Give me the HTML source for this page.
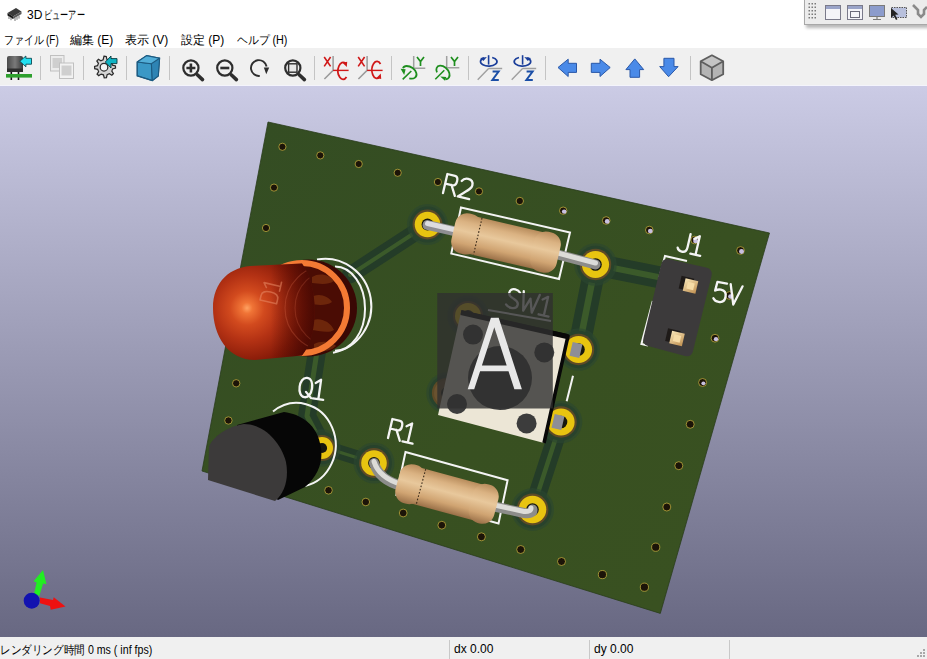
<!DOCTYPE html>
<html><head><meta charset="utf-8">
<style>
html,body{margin:0;padding:0;width:927px;height:659px;overflow:hidden;background:#fff;font-family:"Liberation Sans",sans-serif;}
.abs{position:absolute;}
#title{left:0;top:0;width:927px;height:26px;background:#fff;}
#title .t{left:27px;top:7px;font-size:12px;color:#000;white-space:nowrap;}
#menu{left:0;top:26px;width:927px;height:22px;background:#fff;}
#menu span{position:absolute;top:6px;font-size:12px;color:#000;white-space:nowrap;}
#tb{left:0;top:48px;width:927px;height:38px;background:#f0f0f0;}
.sep{position:absolute;top:8px;width:1px;height:24px;background:#c8c8c8;}
#canvas{left:0;top:86px;width:927px;height:551px;}
#status{left:0;top:637px;width:927px;height:22px;background:#f0f0f0;}
#status span{position:absolute;top:5px;font-size:12px;color:#000;white-space:nowrap;}
.ssep{position:absolute;top:3px;width:1px;height:19px;background:#c8c8c8;}
</style></head><body>
<div id="title" class="abs">
  <svg class="abs" style="left:6px;top:6px" width="17" height="16" viewBox="0 0 17 16">
    <path d="M1.5,7 L10,2 L15.5,5.5 L7,10.5 Z" fill="#3a3a3a"/>
    <path d="M1.5,7 L7,10.5 L7,13 L1.5,9.5 Z" fill="#151515"/>
    <path d="M7,10.5 L15.5,5.5 L15.5,8 L7,13 Z" fill="#5a5a5a"/>
    <path d="M3,10 L3,13 M5,11.2 L5,14.2 M9,12 L9,15 M11,10.8 L11,13.8 M13,9.6 L13,12.6" stroke="#666" stroke-width="0.9"/>
  </svg>
  <span class="abs t" style="top:8px">3D</span><span class="abs t" style="left:44px;transform:scaleX(0.68);transform-origin:0 0">ビューアー</span>
</div>
<div id="menu" class="abs">
  <span style="left:4px;transform:scaleX(0.82);transform-origin:0 0">ファイル (F)</span>
  <span style="left:70px">編集 (E)</span>
  <span style="left:125px">表示 (V)</span>
  <span style="left:181px">設定 (P)</span>
  <span style="left:237px;transform:scaleX(0.9);transform-origin:0 0">ヘルプ (H)</span>
</div>
<div class="abs" style="left:804px;top:0;width:123px;height:24px;background:#ececec;border-left:1px solid #a8a8a8;border-bottom:1px solid #a8a8a8;box-shadow:2px 3px 3px rgba(0,0,0,0.28);"></div>
<svg class="abs" style="left:804px;top:0" width="123" height="24" viewBox="804 0 123 24">
  <g fill="#7a7a7a">
    <rect x="808.5" y="3" width="1.5" height="1.5"/><rect x="811.5" y="3" width="1.5" height="1.5"/><rect x="814.5" y="3" width="1.5" height="1.5"/>
    <rect x="808.5" y="6.5" width="1.5" height="1.5"/><rect x="811.5" y="6.5" width="1.5" height="1.5"/><rect x="814.5" y="6.5" width="1.5" height="1.5"/>
    <rect x="808.5" y="10" width="1.5" height="1.5"/><rect x="811.5" y="10" width="1.5" height="1.5"/><rect x="814.5" y="10" width="1.5" height="1.5"/>
    <rect x="808.5" y="13.5" width="1.5" height="1.5"/><rect x="811.5" y="13.5" width="1.5" height="1.5"/><rect x="814.5" y="13.5" width="1.5" height="1.5"/>
    <rect x="808.5" y="17" width="1.5" height="1.5"/><rect x="811.5" y="17" width="1.5" height="1.5"/><rect x="814.5" y="17" width="1.5" height="1.5"/>
  </g>
  <rect x="825.5" y="5.5" width="15" height="14" fill="#f4f4f8" stroke="#7a7a8a" stroke-width="1"/>
  <rect x="826" y="6" width="14" height="3" fill="#9aa4c8"/>
  <rect x="847.5" y="5.5" width="15" height="14" fill="#f4f4f8" stroke="#7a7a8a" stroke-width="1"/>
  <rect x="848" y="6" width="14" height="3" fill="#9aa4c8"/>
  <rect x="850.5" y="11.5" width="9" height="6" fill="none" stroke="#6a6a7a" stroke-width="1"/>
  <rect x="869.5" y="5.5" width="15" height="11" fill="#8c9ccc" stroke="#7a7a7a" stroke-width="1"/>
  <path d="M877,16.5 L877,19 M873,19.5 L881,19.5" stroke="#7a7a7a" stroke-width="1.2"/>
  <rect x="891.5" y="7.5" width="15" height="10" fill="#b8c0dc" stroke="#555" stroke-width="1" stroke-dasharray="1.5,1"/>
  <path d="M891,8 L891,18 L893.5,15.5 L896,20 L897.5,19.2 L895.2,14.8 L898.5,14.5 Z" fill="#222"/>
  <path d="M913,5 L918,10 L918,14 L921,17 L924,14 L924,10 L927,7" fill="none" stroke="#8a8a8a" stroke-width="2.6"/>
</svg>
<div id="tb" class="abs"></div><div class="abs" style="left:0;top:85px;width:927px;height:1px;background:#f4f4fc"></div>
<svg class="abs" style="left:0;top:48px" width="927" height="38" viewBox="0 48 927 38">
  <defs>
    <linearGradient id="capg" x1="0" y1="0" x2="1" y2="0">
      <stop offset="0" stop-color="#4a4a4a"/><stop offset="0.5" stop-color="#7a7a7a"/><stop offset="1" stop-color="#3a3a3a"/>
    </linearGradient>
  </defs>
  <g stroke="#c4c4c4" stroke-width="1">
    <line x1="40.5" y1="56" x2="40.5" y2="80"/><line x1="83.5" y1="56" x2="83.5" y2="80"/><line x1="126.5" y1="56" x2="126.5" y2="80"/>
    <line x1="169.5" y1="56" x2="169.5" y2="80"/><line x1="314.5" y1="56" x2="314.5" y2="80"/><line x1="391.5" y1="56" x2="391.5" y2="80"/>
    <line x1="468.5" y1="56" x2="468.5" y2="80"/><line x1="545.5" y1="56" x2="545.5" y2="80"/><line x1="690.5" y1="56" x2="690.5" y2="80"/>
  </g>
  <!-- 1 reload board -->
  <rect x="7" y="56" width="16" height="16" rx="2" fill="url(#capg)"/>
  <rect x="7" y="68.5" width="16" height="3.5" fill="#2e2e2e"/>
  <rect x="10.5" y="72" width="1.6" height="8" fill="#111"/><rect x="17.7" y="72" width="1.6" height="8" fill="#111"/>
  <rect x="6" y="74" width="26" height="3.6" fill="#2ea02e"/>
  <path d="M19.8,61.3 L25.9,56 L25.9,58.3 L31.5,58.3 L31.5,64.2 L25.9,64.2 L25.9,66.8 Z" fill="#22e0f0" stroke="#0e4a52" stroke-width="0.9"/>
  <!-- 2 copy disabled -->
  <rect x="50.5" y="55.5" width="13.5" height="15.5" fill="#ececec" stroke="#c0c0c0" stroke-width="1"/>
  <rect x="52.5" y="58" width="9.5" height="10" fill="#cfcfcf"/>
  <rect x="59.5" y="63" width="14" height="15.5" fill="#f2f2f2" stroke="#c0c0c0" stroke-width="1"/>
  <rect x="61.5" y="65.5" width="10" height="10" fill="#cfcfcf"/>
  <!-- 3 gear -->
  <g transform="translate(104,67) scale(1.12) translate(-104,-67)"><path id="gear" d="M104,57.3 L106,57.6 L106.6,60.2 L108.6,61.1 L110.8,59.7 L112.2,61.2 L110.8,63.4 L111.6,65.4 L114.2,66 L114.3,68 L111.7,68.7 L111,70.7 L112.4,72.9 L111,74.4 L108.8,73 L106.8,73.9 L106.2,76.5 L104.2,76.6 L103.5,74 L101.5,73.3 L99.3,74.7 L97.8,73.3 L99.2,71.1 L98.3,69.1 L95.7,68.5 L95.6,66.5 L98.2,65.8 L99,63.8 L97.6,61.6 L99,60.1 L101.2,61.5 L103.2,60.6 Z" fill="#d4d4d4" stroke="#2a2a2a" stroke-width="1.1"/>
  <circle cx="104" cy="67.2" r="3.4" fill="#f4f4f4" stroke="#2a2a2a" stroke-width="1.1"/></g>
  <path d="M105.3,62 L111,56 L111,58.6 L117,58.6 L117,63.6 L111,63.6 L111,68 Z" fill="#10b4c4" stroke="#0a3a40" stroke-width="0.9"/>
  <!-- 4 blue cube -->
  <path d="M137.2,62 L146.7,55.6 L159.6,58.2 L158.3,75.9 L152.3,80.6 L137.2,75.9 Z" fill="#3a98c6" stroke="#1c5a80" stroke-width="1.1"/>
  <path d="M137.2,62 L151.4,63.8 L159.6,58.2 M151.4,63.8 L152.3,80.6" fill="none" stroke="#1c5a80" stroke-width="1"/>
  <path d="M151.4,63.8 L159.6,58.2 L158.3,75.9 L152.3,80.6 Z" fill="#2e84b4"/>
  <path d="M137.2,62 L146.7,55.6 L159.6,58.2 L151.4,63.8 Z" fill="#52aed8"/>
  <path d="M137.2,62 L146.7,55.6 L159.6,58.2 L158.3,75.9 L152.3,80.6 L137.2,75.9 Z M137.2,62 L151.4,63.8 L159.6,58.2 M151.4,63.8 L152.3,80.6" fill="none" stroke="#1c5a80" stroke-width="1.1"/>
  <!-- 5-8 zoom icons -->
  <g fill="none" stroke="#2e2e2e">
    <circle cx="190.9" cy="68" r="7.6" stroke-width="2.2"/>
    <path d="M186.4,68 L195.4,68 M190.9,63.5 L190.9,72.5" stroke-width="2.6"/>
    <path d="M197.3,74.8 L202.5,79.6" stroke-width="3.6" stroke-linecap="round"/>
    <circle cx="224.8" cy="68" r="7.6" stroke-width="2.2"/>
    <path d="M220.3,68 L229.3,68" stroke-width="2.6"/>
    <path d="M231.2,74.8 L236.4,79.6" stroke-width="3.6" stroke-linecap="round"/>
    <path d="M259.8,75.9 A7.9,7.9 0 1,1 266.6,66.5" stroke-width="1.9"/>
    <circle cx="292.8" cy="68" r="7.6" stroke-width="2.2"/>
    <rect x="288.6" y="63.8" width="8.4" height="8.4" stroke-width="1.4" fill="#e8e8e8"/>
    <path d="M299.2,74.8 L304.4,79.6" stroke-width="3.6" stroke-linecap="round"/>
  </g>
  <path d="M263.8,67.4 L269.2,67.4 L266.3,74.2 Z" fill="#2e2e2e"/>
  <!-- rotate X -->
  <g id="rx1">
    <path d="M324.2,57 L330.6,66.4 M330.6,57 L324.2,66.4" stroke="#d01818" stroke-width="1.6" fill="none"/>
    <path d="M333.1,56 L333.1,70.4 L324.4,79" stroke="#9a9a9a" stroke-width="1.5" fill="none"/>
    <path d="M333.1,70.4 L348.6,70.4" stroke="#d01818" stroke-width="1.4" fill="none"/>
    <path d="M345.5,63.5 A5,8.5 0 1,0 346.5,77" stroke="#d01818" stroke-width="1.8" fill="none"/>
  </g>
  <path d="M342.5,62.8 L347.2,61.8 L346.8,67 Z" fill="#d01818"/>
  <g transform="translate(34,0)">
    <path d="M324.2,57 L330.6,66.4 M330.6,57 L324.2,66.4" stroke="#d01818" stroke-width="1.6" fill="none"/>
    <path d="M333.1,56 L333.1,70.4 L324.4,79" stroke="#9a9a9a" stroke-width="1.5" fill="none"/>
    <path d="M333.1,70.4 L348.6,70.4" stroke="#d01818" stroke-width="1.4" fill="none"/>
    <path d="M346.5,64 A5,8.5 0 1,0 345.5,77.2" stroke="#d01818" stroke-width="1.8" fill="none"/>
    <path d="M342.5,78 L347.2,79 L346.8,73.5 Z" fill="#d01818"/>
  </g>
  <!-- rotate Y -->
  <g>
    <path d="M413.7,56 L413.7,68.3 L425.3,68.3" stroke="#a0a0a0" stroke-width="1.5" fill="none"/>
    <path d="M417,57 L420.5,61.5 L424,57 M420.5,61.5 L420.5,66" stroke="#1e8e1e" stroke-width="1.7" fill="none"/>
    <path d="M402.7,79.3 L411.3,71" stroke="#1e8e1e" stroke-width="1.6" fill="none"/>
    <path d="M409.3,78.3 C414,79.5 417.5,77 416.3,73 C415,69 411,66 406.5,66 C404.5,66 403.5,67 403,68.3" stroke="#1e8e1e" stroke-width="1.8" fill="none"/>
    <path d="M400.6,68.8 L405.6,69.3 L404.2,75 Z" fill="#1e8e1e"/>
  </g>
  <g>
    <path d="M446.7,56 L446.7,67.7 L459.3,67.7" stroke="#a0a0a0" stroke-width="1.5" fill="none"/>
    <path d="M451,57 L454.5,61.5 L458,57 M454.5,61.5 L454.5,66" stroke="#1e8e1e" stroke-width="1.7" fill="none"/>
    <path d="M435.3,79.3 L444.3,70.3" stroke="#1e8e1e" stroke-width="1.6" fill="none"/>
    <path d="M437,72.3 C435.5,69.5 436.5,65.8 440,65.7 C444,65.5 448,69 449.3,73 C450.3,76.5 448.5,79.5 445.5,79.2" stroke="#1e8e1e" stroke-width="1.8" fill="none"/>
    <path d="M440.2,76.6 L446.4,77 L445,80.8 Z" fill="#1e8e1e"/>
  </g>
  <!-- rotate Z -->
  <g>
    <path d="M488.6,68.5 L502.2,68.5 M488.6,68.5 L477.7,79.8" stroke="#a0a0a0" stroke-width="1.4" fill="none"/>
    <path d="M492.2,57.5 A8.25,4.5 0 1,1 484,57.9" stroke="#1a3e9a" stroke-width="1.7" fill="none"/>
    <path d="M488.6,55.2 L488.6,64.6" stroke="#1a3e9a" stroke-width="1.6"/>
    <path d="M480.2,58.1 L486.9,57.1 L483.4,61 Z" fill="#1a3e9a"/>
    <path d="M492.6,71.6 L498.6,71.6 L492.4,80 L498.8,80" stroke="#1a4ea6" stroke-width="2" fill="none"/>
  </g>
  <g>
    <path d="M522.6,68.5 L536.2,68.5 M522.6,68.5 L511.7,79.8" stroke="#a0a0a0" stroke-width="1.4" fill="none"/>
    <path d="M519,57.5 A8.25,4.5 0 1,0 527.2,57.9" stroke="#1a3e9a" stroke-width="1.7" fill="none"/>
    <path d="M522.6,55.2 L522.6,64.6" stroke="#1a3e9a" stroke-width="1.6"/>
    <path d="M531,58.1 L524.3,57.1 L527.8,61 Z" fill="#1a3e9a"/>
    <path d="M526.6,71.6 L532.6,71.6 L526.4,80 L532.8,80" stroke="#1a4ea6" stroke-width="2" fill="none"/>
  </g>
  <!-- arrows -->
  <g fill="#4a8ae8" stroke="#2a58a8" stroke-width="1">
    <path d="M558,67.5 L568.2,59.2 L568.2,63.3 L576.5,63.3 L576.5,72.4 L568.2,72.4 L568.2,76.5 Z"/>
    <path d="M610.2,67.5 L600,59.2 L600,63.3 L591.3,63.3 L591.3,72.4 L600,72.4 L600,76.5 Z"/>
    <path d="M634.8,58.9 L643.7,69.6 L639.6,69.6 L639.6,77.3 L630,77.3 L630,69.6 L625.9,69.6 Z"/>
    <path d="M668.6,76.7 L678.1,66.6 L674,66.6 L674,58.3 L663.9,58.3 L663.9,66.6 L659.7,66.6 Z"/>
  </g>
  <!-- gray cube -->
  <path d="M711.9,55.3 L723.2,61.3 L723.2,74.3 L711.9,80.2 L700.7,74.3 L700.7,61.3 Z" fill="#b4b4b4"/>
  <path d="M700.7,61.3 L711.9,55.3 L723.2,61.3 L711.9,67.8 Z" fill="#c4c4c4"/>
  <path d="M711.9,55.3 L723.2,61.3 L723.2,74.3 L711.9,80.2 L700.7,74.3 L700.7,61.3 Z M700.7,61.3 L711.9,67.8 L723.2,61.3 M711.9,67.8 L711.9,80.2" fill="none" stroke="#5e5e5e" stroke-width="1.8" stroke-linejoin="round"/>
  <!-- floating toolbar top-right -->
  <g>
  </g>
</svg>
<svg id="canvas" class="abs" width="927" height="551" viewBox="0 86 927 551">
  <defs>
    <linearGradient id="bg" x1="0" y1="86" x2="0" y2="637" gradientUnits="userSpaceOnUse">
      <stop offset="0" stop-color="#cbcbe5"/>
      <stop offset="1" stop-color="#686882"/>
    </linearGradient>
    <linearGradient id="boardg" x1="268" y1="122" x2="660" y2="613" gradientUnits="userSpaceOnUse">
      <stop offset="0" stop-color="#344d23"/>
      <stop offset="0.6" stop-color="#385021"/>
      <stop offset="1" stop-color="#395121"/>
    </linearGradient>
    <linearGradient id="resg" x1="0" y1="0" x2="0" y2="1">
      <stop offset="0" stop-color="#b88c5c"/>
      <stop offset="0.22" stop-color="#dab282"/>
      <stop offset="0.45" stop-color="#e8c89c"/>
      <stop offset="0.75" stop-color="#d0a472"/>
      <stop offset="1" stop-color="#9a7048"/>
    </linearGradient>
    <linearGradient id="leadg" x1="0" y1="0" x2="0" y2="1">
      <stop offset="0" stop-color="#8a8a88"/>
      <stop offset="0.4" stop-color="#e8e8e4"/>
      <stop offset="1" stop-color="#909090"/>
    </linearGradient>
    <radialGradient id="domeg" cx="248" cy="308" r="78" fx="247" fy="308" gradientUnits="userSpaceOnUse">
      <stop offset="0" stop-color="#ffa262"/>
      <stop offset="0.07" stop-color="#f07436"/>
      <stop offset="0.22" stop-color="#d24a1e"/>
      <stop offset="0.42" stop-color="#b43214"/>
      <stop offset="0.7" stop-color="#861a08"/>
      <stop offset="1" stop-color="#560a04"/>
    </radialGradient>
    <linearGradient id="ledbody" x1="0" y1="262" x2="0" y2="360" gradientUnits="userSpaceOnUse">
      <stop offset="0" stop-color="#5a0e04"/>
      <stop offset="0.35" stop-color="#8a2a0c"/>
      <stop offset="0.7" stop-color="#7a200a"/>
      <stop offset="1" stop-color="#4a0a02"/>
    </linearGradient>
    <clipPath id="ledclip"><path d="M255,265.8 L302,263.5 C318,285 320,333 302,355.5 L255,360 C228,360 213,336 213,308 C213,282 230,266 255,265.8 Z"/></clipPath>
    <linearGradient id="ledshade" x1="213" y1="0" x2="318" y2="0" gradientUnits="userSpaceOnUse">
      <stop offset="0" stop-color="#3a0602" stop-opacity="0"/>
      <stop offset="0.55" stop-color="#3a0602" stop-opacity="0"/>
      <stop offset="1" stop-color="#3a0602" stop-opacity="0.75"/>
    </linearGradient>
    <linearGradient id="pinG" x1="0" y1="0" x2="1" y2="1">
      <stop offset="0" stop-color="#f8e6b8"/>
      <stop offset="1" stop-color="#c09050"/>
    </linearGradient>
  </defs>
  <rect x="0" y="86" width="927" height="551" fill="url(#bg)"/>
  <polygon points="268,122 769.5,233 660.3,613.4 202,471" fill="url(#boardg)" stroke="#2a3c1c" stroke-width="0.8"/>

  <!-- traces -->
  <g fill="none" stroke-linecap="round" stroke-linejoin="round">
    <g stroke="#243c28" stroke-width="14.5">
      <polyline points="323,447 374,463"/>
    </g>
    <polyline points="427.5,224.5 350,275" stroke="#243c28" stroke-width="17"/>
    <g stroke="#3b5a2a" stroke-width="3.2">
      <polyline points="323,447 374,463"/>
    </g>
    <polyline points="427.5,224.5 350,275" stroke="#3b5a2a" stroke-width="4"/>
    <polyline points="595.5,264.5 578.5,349.5" stroke="#243c28" stroke-width="22"/>
    <polyline points="595.5,264.5 578.5,349.5" stroke="#3b5a2a" stroke-width="6.5"/>
    <polyline points="561,422 532.5,509.5" stroke="#243c28" stroke-width="18"/>
    <polyline points="561,422 532.5,509.5" stroke="#3b5a2a" stroke-width="4.5"/>
    <polyline points="318,345 307,416 323,447" stroke="#243c28" stroke-width="18"/>
    <polyline points="318,345 307,416 323,447" stroke="#3b5a2a" stroke-width="5"/>
    <polyline points="595.5,264.5 663,278" stroke="#243c28" stroke-width="22"/>
    <polyline points="595.5,264.5 663,278" stroke="#3b5a2a" stroke-width="6"/>
  </g>

  <!-- pads -->
  <g transform="translate(427.5,224.5)"><circle r="20.5" fill="#2c4630" fill-opacity="0.6"/><circle r="18.0" fill="#28422c"/><circle r="14.9" fill="#5e4a26"/><circle r="12.8" fill="#e8c410"/><circle r="5.9" fill="#16160e"/></g>
  <g transform="translate(595.5,264.5)"><circle r="21.3" fill="#2c4630" fill-opacity="0.6"/><circle r="18.8" fill="#28422c"/><circle r="15.7" fill="#5e4a26"/><circle r="13.6" fill="#e8c410"/><circle r="6.3" fill="#16160e"/></g>
  <g transform="translate(578.5,349.5)"><circle r="21.3" fill="#2c4630" fill-opacity="0.6"/><circle r="18.8" fill="#28422c"/><circle r="15.7" fill="#5e4a26"/><circle r="13.6" fill="#e8c410"/><circle r="6.3" fill="#16160e"/></g>
  <g transform="translate(561.0,422.0)"><circle r="21.3" fill="#2c4630" fill-opacity="0.6"/><circle r="18.8" fill="#28422c"/><circle r="15.7" fill="#5e4a26"/><circle r="13.6" fill="#e8c410"/><circle r="6.3" fill="#16160e"/></g>
  <g transform="translate(374.0,463.0)"><circle r="20.5" fill="#2c4630" fill-opacity="0.6"/><circle r="18.0" fill="#28422c"/><circle r="14.9" fill="#5e4a26"/><circle r="12.8" fill="#e8c410"/><circle r="5.9" fill="#16160e"/></g>
  <g transform="translate(532.5,509.5)"><circle r="21.5" fill="#2c4630" fill-opacity="0.6"/><circle r="19.0" fill="#28422c"/><circle r="15.9" fill="#5e4a26"/><circle r="13.8" fill="#e8c410"/><circle r="6.3" fill="#16160e"/></g>
  <g transform="translate(322.0,448.0)"><circle r="18.7" fill="#2c4630" fill-opacity="0.6"/><circle r="16.2" fill="#28422c"/><circle r="13.1" fill="#5e4a26"/><circle r="11.0" fill="#e8c410"/><circle r="5.1" fill="#16160e"/></g>
  <g transform="translate(468.0,316.0)"><circle r="20.7" fill="#2c4630" fill-opacity="0.6"/><circle r="18.2" fill="#28422c"/><circle r="15.1" fill="#5e4a26"/><circle r="13.0" fill="#e8c410"/><circle r="6.0" fill="#16160e"/></g>
  <g transform="translate(447.0,393.0)"><circle r="20.7" fill="#2c4630" fill-opacity="0.6"/><circle r="18.2" fill="#28422c"/><circle r="15.1" fill="#5e4a26"/><circle r="13.0" fill="#6a5230"/><circle r="6.0" fill="#16160e"/></g>

  <!-- vias -->
  <g fill="#1c1408" stroke="#c4b040" stroke-width="0.9" stroke-opacity="0.85">
    <circle cx="282.4" cy="146.8" r="3.6"/><circle cx="320.3" cy="155.4" r="3.6"/><circle cx="358.7" cy="164" r="3.6"/><circle cx="397.7" cy="172.8" r="3.6"/><circle cx="437.9" cy="182" r="3.6"/><circle cx="479" cy="191.4" r="3.6"/>
    <circle cx="519.8" cy="201" r="3.7"/><circle cx="563.2" cy="210.7" r="3.7"/><circle cx="606.2" cy="220.5" r="3.8"/><circle cx="649.3" cy="230" r="3.8"/><circle cx="694.6" cy="240" r="3.8"/><circle cx="740.5" cy="250.5" r="3.9"/>
    <circle cx="274" cy="187.6" r="3.6"/><circle cx="266" cy="228" r="3.6"/><circle cx="236.2" cy="383.3" r="3.7"/><circle cx="228.4" cy="420.5" r="3.7"/>
    <circle cx="729.5" cy="295.5" r="3.9"/><circle cx="715" cy="338.2" r="3.9"/><circle cx="702.6" cy="382.5" r="4"/><circle cx="690.2" cy="424.3" r="4"/><circle cx="678.8" cy="465.7" r="4"/><circle cx="666.8" cy="507" r="4"/><circle cx="655.7" cy="547.2" r="4.1"/><circle cx="644.4" cy="587.2" r="4.1"/>
    <circle cx="328.5" cy="490.3" r="3.8"/><circle cx="365.8" cy="502" r="3.8"/><circle cx="403.2" cy="513" r="3.9"/><circle cx="441.8" cy="525.2" r="3.9"/><circle cx="481.4" cy="536.8" r="4"/><circle cx="520.7" cy="549.5" r="4"/><circle cx="561.5" cy="561.5" r="4"/><circle cx="602.4" cy="574.6" r="4.1"/>
  </g>

  <g fill="#c8c0e0">
    <ellipse cx="564.2" cy="211.6" rx="2.3" ry="2.2"/><ellipse cx="607.2" cy="221.4" rx="2.4" ry="2.3"/><ellipse cx="650.3" cy="231" rx="2.4" ry="2.3"/>
    <ellipse cx="695.6" cy="241" rx="2.5" ry="2.3"/><ellipse cx="741.5" cy="251.5" rx="2.5" ry="2.4"/><ellipse cx="730.5" cy="296.5" rx="2.4" ry="2.3"/><ellipse cx="716" cy="339.2" rx="2.2" ry="2.1"/><ellipse cx="703.4" cy="383.3" rx="2" ry="1.9"/>
  </g>
  <!-- silkscreen -->
  <g fill="none" stroke="#f4f4f4" stroke-width="2" stroke-linejoin="miter">
    <polygon points="461,207.5 570,232.5 559,279 451.3,253.6"/>
    <polygon points="405.5,452 507.6,480.3 498.5,523.4 396.4,495.1"/>
    <polyline points="687,261 665,256 659,279"/>
    <polyline points="652.8,301 641.4,344 648,345.5"/>
    <path d="M317,259.5 A46,47 0 1,1 333,352.7"/>
    <path d="M335,266.6 A30,42 0 0,1 335,350.7"/>
    <path d="M273,411.6 A39,42 0 1,1 305,486"/>
    <line x1="573" y1="375.8" x2="566.7" y2="401.3"/>
    <line x1="699" y1="312" x2="699.8" y2="314.5"/>
  </g>
  <path transform="translate(447.40,174.00) rotate(13.00)" d="M 0.00,19.60 L 0.00,0.00 L 7.84,0.00 C 12.15,0.00 12.15,9.80 7.84,9.80 L 0.00,9.80 M 6.47,9.80 L 12.15,19.60 M 15.48,3.53 C 17.05,0.39 19.01,0.00 21.36,0.00 C 24.89,0.00 26.85,2.35 26.85,5.49 C 26.85,8.82 23.91,10.78 15.09,19.60 L 26.85,19.60" fill="none" stroke="#f4f4f4" stroke-width="2.30" stroke-linecap="round" stroke-linejoin="round"/>
  <path transform="translate(392.40,419.00) rotate(13.00)" d="M 0.00,19.50 L 0.00,0.00 L 7.80,0.00 C 12.09,0.00 12.09,9.75 7.80,9.75 L 0.00,9.75 M 6.44,9.75 L 12.09,19.50 M 15.40,3.90 L 20.28,0.00 L 20.28,19.50 M 14.82,19.50 L 25.16,19.50" fill="none" stroke="#f4f4f4" stroke-width="2.30" stroke-linecap="round" stroke-linejoin="round"/>
  <path transform="translate(301.00,377.00) rotate(8.00)" d="M 6.24,0.00 C 10.73,0.00 12.48,4.88 12.48,9.75 C 12.48,15.21 10.14,19.50 6.24,19.50 C 2.34,19.50 0.00,15.21 0.00,9.75 C 0.00,4.88 1.95,0.00 6.24,0.00 Z M 7.02,14.04 L 12.87,19.50 M 15.40,3.90 L 20.28,0.00 L 20.28,19.50 M 14.82,19.50 L 25.16,19.50" fill="none" stroke="#f4f4f4" stroke-width="2.30" stroke-linecap="round" stroke-linejoin="round"/>
  <path transform="translate(681.30,232.00) rotate(13.00)" d="M 9.50,0.00 L 9.50,13.68 C 9.50,18.05 7.60,19.00 4.75,19.00 C 2.28,19.00 0.76,18.05 0.00,16.15 M 14.25,3.80 L 19.00,0.00 L 19.00,19.00 M 13.68,19.00 L 23.75,19.00" fill="none" stroke="#f4f4f4" stroke-width="2.30" stroke-linecap="round" stroke-linejoin="round"/>
  <path transform="translate(716.30,281.70) rotate(10.00)" d="M 10.92,0.00 L 1.17,0.00 L 0.39,8.97 C 2.34,7.41 3.90,7.02 5.85,7.02 C 9.75,7.02 11.70,9.75 11.70,13.26 C 11.70,17.16 9.36,19.50 5.85,19.50 C 2.92,19.50 1.17,18.52 0.00,16.77 M 14.62,0.00 L 20.67,19.50 L 26.71,0.00" fill="none" stroke="#f4f4f4" stroke-width="2.30" stroke-linecap="round" stroke-linejoin="round"/>

  <!-- R2 leads + body -->
  <g stroke-linecap="round" fill="none">
    <line x1="427.5" y1="225" x2="458" y2="232" stroke="#8e8e92" stroke-width="10"/>
    <line x1="427.5" y1="223.5" x2="458" y2="230.5" stroke="#dcdce0" stroke-width="5"/>
    <line x1="552" y1="253" x2="595.5" y2="264.5" stroke="#8c8c8a" stroke-width="10"/>
    <line x1="552" y1="251.5" x2="595.5" y2="263" stroke="#dcdcd8" stroke-width="5"/>
  </g>
  <g transform="translate(506,243) rotate(13)">
    <rect x="-34" y="-19" width="68" height="38" fill="url(#resg)"/>
    <rect x="-54" y="-20.5" width="27" height="41" rx="12" fill="url(#resg)"/>
    <rect x="27" y="-20.5" width="27" height="41" rx="12" fill="url(#resg)"/>
    <line x1="-29" y1="-19" x2="-29" y2="18.5" stroke="#3a2a1a" stroke-width="1.1" stroke-dasharray="1.6,1.8"/>
  </g>

  <!-- R1 leads + body -->
  <g stroke-linecap="round" fill="none">
    <path d="M374,463 Q379,480 402,486" stroke="#8c8c8a" stroke-width="10"/>
    <path d="M374,461.5 Q379,478 402,484.5" stroke="#dcdcd8" stroke-width="5"/>
    <path d="M492,506 L524,513 Q533,514 532.5,509.5" stroke="#8c8c8a" stroke-width="10"/>
    <path d="M492,504.5 L524,511.5 Q531,512 531,508" stroke="#dcdcd8" stroke-width="5"/>
  </g>
  <g transform="translate(447,494) rotate(15)">
    <rect x="-32" y="-18.5" width="64" height="37" fill="url(#resg)"/>
    <rect x="-51" y="-20" width="26" height="40" rx="12" fill="url(#resg)"/>
    <rect x="25" y="-20" width="26" height="40" rx="12" fill="url(#resg)"/>
    <line x1="-27" y1="-18.5" x2="-27" y2="18" stroke="#3a2a1a" stroke-width="1.1" stroke-dasharray="1.6,1.8"/>
  </g>

  <!-- J1 header -->
  <path d="M668,259 L706,267.5 Q713,269 711.5,276 L693,351 Q691.5,357.5 685,356 L648,346 Q642,344.5 643.5,338 L661,265 Q662.5,258 668,259 Z" fill="#3c3a3b"/>
  <g transform="translate(690.5,286) rotate(13)"><rect x="-11" y="-8" width="13" height="13" fill="#1e1a18"/><rect x="-6.5" y="-6.5" width="13" height="13" fill="url(#pinG)"/><rect x="-3.5" y="-3.5" width="7" height="7" fill="#f6dca6"/></g>
  <g transform="translate(677,338.5) rotate(13)"><rect x="-11" y="-8" width="13" height="13" fill="#1e1a18"/><rect x="-6.5" y="-6.5" width="13" height="13" fill="url(#pinG)"/><rect x="-3.5" y="-3.5" width="7" height="7" fill="#f6dca6"/></g>

  <!-- SW1 switch -->
  <polygon points="461,312 568,336 544,443 438,415" fill="#ece6d6"/>
  <polyline points="461,312.5 567,336.5" fill="none" stroke="#080808" stroke-width="5"/>
  <polyline points="461,312 568,336 544,443" fill="none" stroke="#080808" stroke-width="3.5" stroke-linejoin="round"/>
  <g fill="#3c3c3c">
    <circle cx="500" cy="378" r="32"/>
    <circle cx="473" cy="334.6" r="10"/>
    <circle cx="544.3" cy="352.4" r="10"/>
    <circle cx="457" cy="404" r="10"/>
    <circle cx="526.6" cy="423.4" r="10"/>
  </g>
  <g fill="#8e8e96"><rect x="571" y="343" width="10" height="14" transform="rotate(13 576 350)"/><rect x="553" y="415" width="10" height="14" transform="rotate(13 558 422)"/></g>
  <path transform="translate(509.80,288.00) rotate(13.00)" d="M 11.08,2.29 C 9.55,0.57 7.64,0.00 5.73,0.00 C 2.29,0.00 0.57,1.91 0.57,4.78 C 0.57,8.02 3.82,8.79 6.11,9.55 C 9.17,10.51 11.46,11.46 11.46,14.52 C 11.46,17.57 9.17,19.10 5.73,19.10 C 3.44,19.10 1.53,18.34 0.00,16.81 M 14.33,0.00 L 18.15,19.10 L 22.54,5.73 L 26.93,19.10 L 30.75,0.00 M 34.57,3.82 L 39.35,0.00 L 39.35,19.10 M 34.00,19.10 L 44.12,19.10" fill="none" stroke="#f4f4f4" stroke-width="2.30" stroke-linecap="round" stroke-linejoin="round"/>
  <line x1="488" y1="310" x2="551" y2="321" stroke="#f4f4f4" stroke-width="2"/>

  <!-- LED D1 -->
  <circle cx="308.5" cy="308" r="48.5" fill="#3a0804"/>
  <circle cx="302" cy="308" r="45" fill="#4a0c04"/>
  <g fill="#8a3c12" fill-opacity="0.55">
    <path d="M312,277 C320,272 330,275 334,281 C328,285 320,284 312,283 Z"/>
    <path d="M310,298 C318,292 328,296 332,302 C326,306 318,305 310,304 Z"/>
    <path d="M310,322 C316,316 330,320 334,330 C328,334 318,330 310,330 Z"/>
    <path d="M314,344 C322,340 332,342 336,346 C330,352 320,352 314,350 Z"/>
  </g>
  <circle cx="302" cy="308" r="45" fill="none" stroke="#f47a34" stroke-width="6"/>
  <path d="M255,265.8 L302,263.5 C318,285 320,333 302,355.5 L255,360 C228,360 213,336 213,308 C213,282 230,266 255,265.8 Z" fill="url(#domeg)"/>
  <path d="M255,265.8 L302,263.5 C318,285 320,333 302,355.5 L255,360 C228,360 213,336 213,308 C213,282 230,266 255,265.8 Z" fill="url(#ledshade)"/>
  <g clip-path="url(#ledclip)">
  <circle cx="328" cy="308" r="43" fill="none" stroke="#e07050" stroke-opacity="0.28" stroke-width="1.2"/>
  <circle cx="334" cy="308" r="39" fill="none" stroke="#e07050" stroke-opacity="0.22" stroke-width="1.2"/>
  </g>
  <path transform="translate(260.00,300.00) rotate(-77.00)" d="M 0.00,0.00 L 0.00,17.00 L 4.76,17.00 C 8.50,17.00 10.20,13.60 10.20,8.50 C 10.20,3.40 8.50,0.00 4.76,0.00 Z M 13.60,3.40 L 17.85,0.00 L 17.85,17.00 M 13.09,17.00 L 22.10,17.00" fill="none" stroke="#e88a66" stroke-width="1.60" stroke-linecap="round" stroke-linejoin="round" stroke-opacity="0.55"/>
  <!-- Q1 transistor -->
  <path d="M237,425 L284,412 C300,414 318,424 321,448 C323,462 318,476 305,487 L278,500 L240,470 Z" fill="#060606"/>
  <path d="M208,480 L209,447 C212,437 228,426 244,424 C262,424 280,440 286,462 C289,478 285,493 275,501 Z" fill="#3c3a3a"/>

  <!-- overlay -->
  <rect x="437.3" y="293" width="115.5" height="115.5" fill="#303030" fill-opacity="0.8"/>
  <path d="M467.7,389.3 L490.9,317.7 L498.7,317.7 L521.9,389.3 L514.4,389.3 L508.5,371.2 L480.1,371.2 L474.2,389.3 Z M481.9,365.4 L506.7,365.4 L494.3,327.3 Z" fill="#e8e8e8" fill-rule="evenodd"/>

  <!-- axis gizmo -->
  <polygon points="43,570 33.6,581.3 36.6,582.5 34,594 39.3,596 43.1,583.5 46.5,584.3" fill="#22ee22"/>
  <polygon points="65.5,606.4 53.7,597.2 53,600 40,597.6 40,603.3 50,606 50.7,609.8" fill="#ee1111"/>
  <circle cx="31.7" cy="600.7" r="8" fill="#1212b0"/>
</svg>
<div id="status" class="abs">
  <span style="left:0px;transform:scaleX(0.885);transform-origin:0 0">レンダリング時間 0 ms ( inf fps)</span>
  <div class="ssep" style="left:449px"></div>
  <span style="left:454px">dx 0.00</span>
  <div class="ssep" style="left:589px"></div>
  <span style="left:594px">dy 0.00</span>
  <div class="ssep" style="left:729px"></div>
  <svg class="abs" style="left:915px;top:10px" width="12" height="12" viewBox="0 0 12 12"><g fill="#a8a8a8"><rect x="8" y="2" width="2" height="2"/><rect x="5" y="5" width="2" height="2"/><rect x="8" y="5" width="2" height="2"/><rect x="2" y="8" width="2" height="2"/><rect x="5" y="8" width="2" height="2"/><rect x="8" y="8" width="2" height="2"/></g></svg>
</div>
</body></html>
